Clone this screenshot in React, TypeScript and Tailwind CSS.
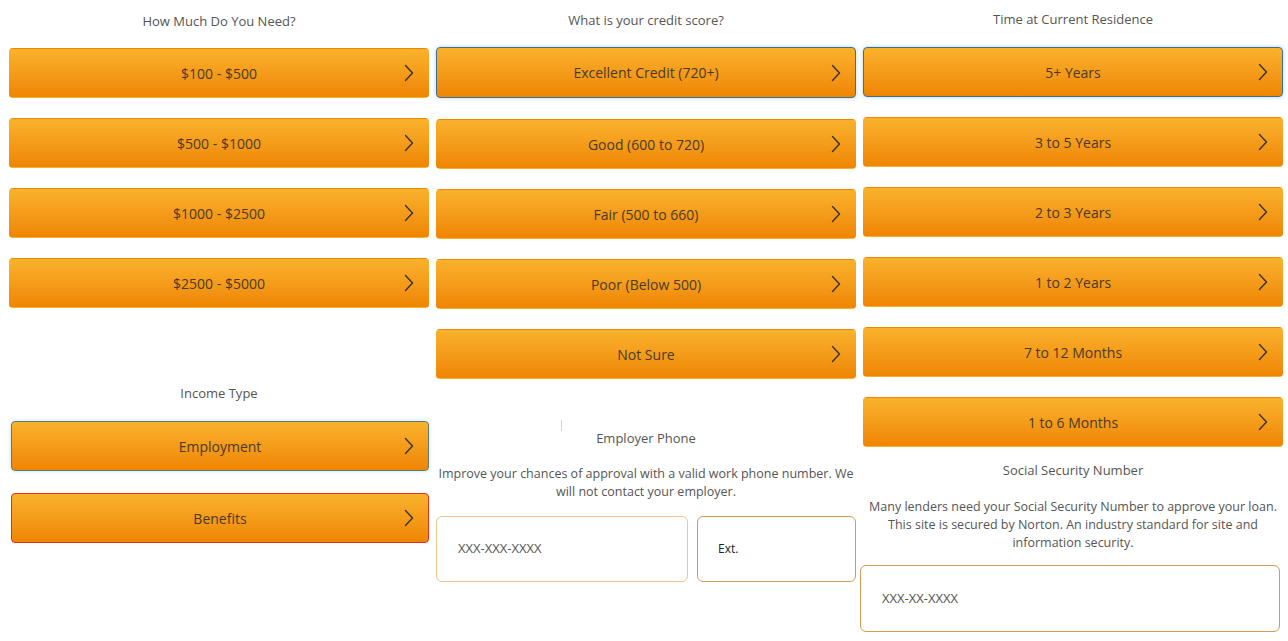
import React from 'react';

const Chevron = () => (
  <svg width="10" height="18" viewBox="0 0 10 18" fill="none" className="absolute right-[14px] top-1/2 -translate-y-1/2">
    <path d="M1.5 1.5 L8.5 9 L1.5 16.5" stroke="#3a3128" strokeWidth="1.4" strokeLinecap="round" strokeLinejoin="round" />
  </svg>
);

type Tone = 'plain' | 'blue' | 'green' | 'red';

const toneClass: Record<Tone, string> = {
  plain: 'border border-transparent',
  blue: 'border border-[#3f6f8a] shadow-[0_0_4px_rgba(80,160,220,0.45)]',
  green: 'border border-[#5e7a68] shadow-[0_0_4px_rgba(80,160,220,0.35)]',
  red: 'border border-[#e0301e]',
};

const OptionButton = ({ label, tone = 'plain', className = '' }: { label: string; tone?: Tone; className?: string }) => (
  <button
    className={`relative flex h-[50px] w-full items-center justify-center rounded-[4px] bg-gradient-to-b from-[#f9b22b] to-[#ef8501] text-[14px] text-[#4a3a22] ${toneClass[tone]} ${className}`}
  >
    <span>{label}</span>
    <Chevron />
  </button>
);

const Label = ({ children, className = '' }: { children: React.ReactNode; className?: string }) => (
  <div className={`text-center leading-[18px] text-[#555555] ${className}`}>{children}</div>
);

export default function App() {
  return (
    <div className="grid h-[641px] w-[1288px] grid-cols-[420px_420px_420px] gap-x-[7px] bg-white pl-[9px] font-['Open_Sans',sans-serif]">
      {/* How much / income */}
      <div className="flex flex-col">
        <Label className="mt-[12px] mb-[18px] text-[13px]">How Much Do You Need?</Label>
        <div className="flex flex-col gap-[20px]">
          <OptionButton label="$100 - $500" />
          <OptionButton label="$500 - $1000" />
          <OptionButton label="$1000 - $2500" />
          <OptionButton label="$2500 - $5000" />
        </div>
        <Label className="mt-[76px] mb-[19px] text-[13px]">Income Type</Label>
        <div className="ml-[2px] flex flex-col gap-[22px]">
          <OptionButton label="Employment" tone="green" />
          <OptionButton label="Benefits" tone="red" />
        </div>
      </div>

      {/* Credit score / employer phone */}
      <div className="flex flex-col">
        <Label className="mt-[11px] mb-[18px] text-[13px]">What is your credit score?</Label>
        <div className="flex flex-col gap-[20px]">
          <OptionButton label="Excellent Credit (720+)" tone="blue" className="h-[51px] mb-[1px]" />
          <OptionButton label="Good (600 to 720)" />
          <OptionButton label="Fair (500 to 660)" />
          <OptionButton label="Poor (Below 500)" />
          <OptionButton label="Not Sure" />
        </div>
        <div className="mt-[41px] ml-[125px] h-[11px] w-px bg-[#d4d4d4]" />
        <Label className="-mt-[2px] text-[13px]">Employer Phone</Label>
        <Label className="mt-[18px] text-[12.5px]">
          Improve your chances of approval with a valid work phone number. We will not contact your employer.
        </Label>
        <div className="mt-[15px] flex gap-[9px]">
          <div className="flex h-[66px] w-[252px] items-center rounded-[6px] border border-[#f0c590] pl-[21px] text-[13px] text-[#555555]">
            XXX-XXX-XXXX
          </div>
          <div className="flex h-[66px] w-[159px] items-center rounded-[6px] border border-[#d39a55] pl-[20px] text-[12px] text-[#222222]">
            Ext.
          </div>
        </div>
      </div>

      {/* Residence / SSN */}
      <div className="flex flex-col">
        <Label className="mt-[10px] mb-[19px] text-[13px]">Time at Current Residence</Label>
        <div className="flex flex-col gap-[20px]">
          <OptionButton label="5+ Years" tone="blue" />
          <OptionButton label="3 to 5 Years" />
          <OptionButton label="2 to 3 Years" />
          <OptionButton label="1 to 2 Years" />
          <OptionButton label="7 to 12 Months" />
          <OptionButton label="1 to 6 Months" />
        </div>
        <Label className="mt-[14px] text-[13px]">Social Security Number</Label>
        <Label className="mt-[19px] text-[12.5px]">
          Many lenders need your Social Security Number to approve your loan. This site is secured by Norton. An industry standard for site and information security.
        </Label>
        <div className="-ml-[3px] mt-[13px] flex h-[67px] w-[420px] items-center rounded-[6px] border border-[#d39a55] pl-[21px] text-[13px] text-[#555555]">
          XXX-XX-XXXX
        </div>
      </div>
    </div>
  );
}
